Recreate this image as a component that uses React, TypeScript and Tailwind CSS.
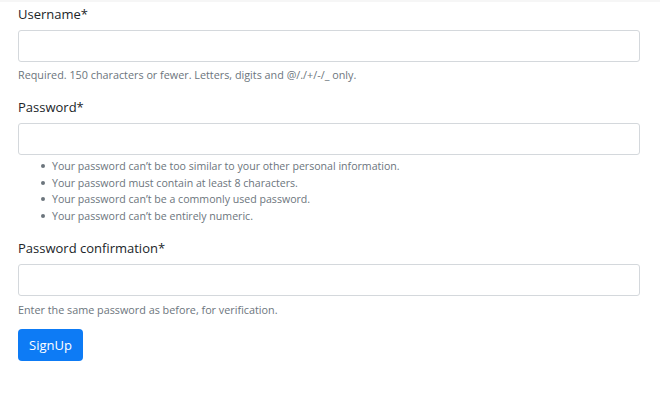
const FONT = "font-['Open_Sans','Noto_Sans',sans-serif]";

const rules = [
  "Your password can\u2019t be too similar to your other personal information.",
  "Your password must contain at least 8 characters.",
  "Your password can\u2019t be a commonly used password.",
  "Your password can\u2019t be entirely numeric.",
];

function Field({ label, type = "text" }: { label: string; type?: string }) {
  return (
    <>
      <label className="block h-[21px] text-[13px] leading-[21px] text-[#212529] mb-[5px]">{label}</label>
      <input
        type={type}
        className="block h-[32px] w-full rounded-[3px] border border-[#d4d8dc] bg-white px-2 text-[13px] outline-none"
      />
    </>
  );
}

export default function App() {
  return (
    <div className={`${FONT} min-h-[412px] w-[660px] bg-white border-t-2 border-[#f6f6f6]`}>
      <form className="pl-[18px] pr-[20px] pt-[2px]" onSubmit={(e) => e.preventDefault()}>
        <Field label="Username*" />
        <p className="mt-[4px] mb-[14px] text-[10.8px] leading-[17px] text-[#6c757d]">
          Required. 150 characters or fewer. Letters, digits and @/./+/-/_ only.
        </p>

        <Field label="Password*" type="password" />
        <ul className="mt-[3px] mb-[14px] pl-[23px] text-[10.6px] leading-[16.6px] text-[#6c757d]">
          {rules.map((r) => (
            <li key={r} className="flex items-center">
              <span className="mr-[7px] h-[4px] w-[4px] shrink-0 rounded-full bg-[#6c757d]" />
              {r}
            </li>
          ))}
        </ul>

        <Field label="Password confirmation*" type="password" />
        <p className="mt-[5px] mb-[11px] text-[10.8px] leading-[17px] text-[#6c757d]">
          Enter the same password as before, for verification.
        </p>

        <button
          type="submit"
          className="h-[32px] w-[65px] rounded-[4px] bg-[#0d7bf5] text-[13px] text-white"
        >
          SignUp
        </button>
      </form>
    </div>
  );
}
